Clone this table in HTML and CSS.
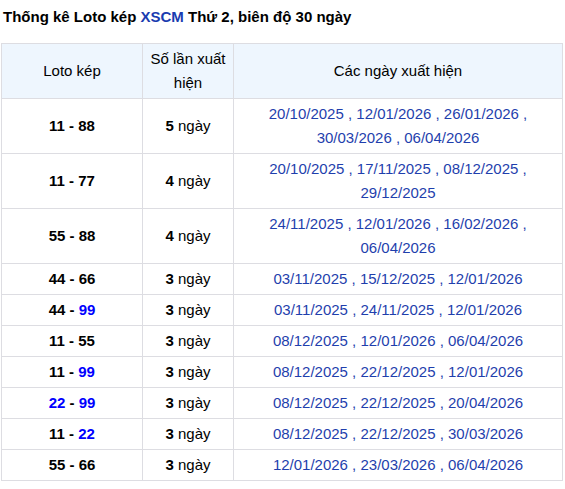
FILE: index.html
```html
<!DOCTYPE html>
<html lang="vi">
<head>
<meta charset="utf-8">
<link rel="stylesheet" href="styles.css">
</head>
<body>
<div class="wrap">
  <h2 class="title">Thống kê Loto kép <span class="hl">XSCM</span> Thứ 2, biên độ 30 ngày</h2>
  <table class="tbl">
    <colgroup><col class="c1"><col class="c2"><col class="c3"></colgroup>
    <thead>
      <tr><th>Loto kép</th><th>Số lần xuất hiện</th><th>Các ngày xuất hiện</th></tr>
    </thead>
    <tbody>
      <tr><td class="num">11 - 88</td><td><b>5</b> ngày</td><td class="dates">20/10/2025 , 12/01/2026 , 26/01/2026 , 30/03/2026 , 06/04/2026</td></tr>
      <tr><td class="num">11 - 77</td><td><b>4</b> ngày</td><td class="dates">20/10/2025 , 17/11/2025 , 08/12/2025 , 29/12/2025</td></tr>
      <tr><td class="num">55 - 88</td><td><b>4</b> ngày</td><td class="dates">24/11/2025 , 12/01/2026 , 16/02/2026 , 06/04/2026</td></tr>
      <tr><td class="num">44 - 66</td><td><b>3</b> ngày</td><td class="dates">03/11/2025 , 15/12/2025 , 12/01/2026</td></tr>
      <tr><td class="num">44 - <span class="bl">99</span></td><td><b>3</b> ngày</td><td class="dates">03/11/2025 , 24/11/2025 , 12/01/2026</td></tr>
      <tr><td class="num">11 - 55</td><td><b>3</b> ngày</td><td class="dates">08/12/2025 , 12/01/2026 , 06/04/2026</td></tr>
      <tr><td class="num">11 - <span class="bl">99</span></td><td><b>3</b> ngày</td><td class="dates">08/12/2025 , 22/12/2025 , 12/01/2026</td></tr>
      <tr><td class="num"><span class="bl">22</span> - <span class="bl">99</span></td><td><b>3</b> ngày</td><td class="dates">08/12/2025 , 22/12/2025 , 20/04/2026</td></tr>
      <tr><td class="num">11 - <span class="bl">22</span></td><td><b>3</b> ngày</td><td class="dates">08/12/2025 , 22/12/2025 , 30/03/2026</td></tr>
      <tr><td class="num">55 - 66</td><td><b>3</b> ngày</td><td class="dates">12/01/2026 , 23/03/2026 , 06/04/2026</td></tr>
    </tbody>
  </table>
</div>
</body>
</html>
```
FILE: styles.css
```css
html, body {
  margin: 0;
  padding: 0;
  background: #fff;
}
body {
  font-family: "Liberation Sans", Arial, sans-serif;
  font-size: 15px;
  color: #000;
}
.wrap {
  padding: 0 4px 0 1px;
}
.title {
  font-size: 15px;
  font-weight: bold;
  margin: 0;
  padding: 8px 0 0 2px;
  line-height: 18px;
  height: 43px;
  box-sizing: border-box;
}
.hl {
  color: #1a3cb0;
}
.tbl {
  width: 561px;
  border-collapse: collapse;
  table-layout: fixed;
}
.c1 { width: 141px; }
.c2 { width: 91px; }
.c3 { width: 329px; }
.tbl th, .tbl td {
  border: 1px solid #dddde2;
  text-align: center;
  vertical-align: middle;
  line-height: 24px;
  padding: 3px 6px;
}
.tbl th {
  font-weight: normal;
  background: #eef6fe;
  padding: 3px 4px;
}
.num {
  font-weight: bold;
}
.bl {
  color: #0000ff;
}
.dates {
  color: #1f3fad;
}
```
